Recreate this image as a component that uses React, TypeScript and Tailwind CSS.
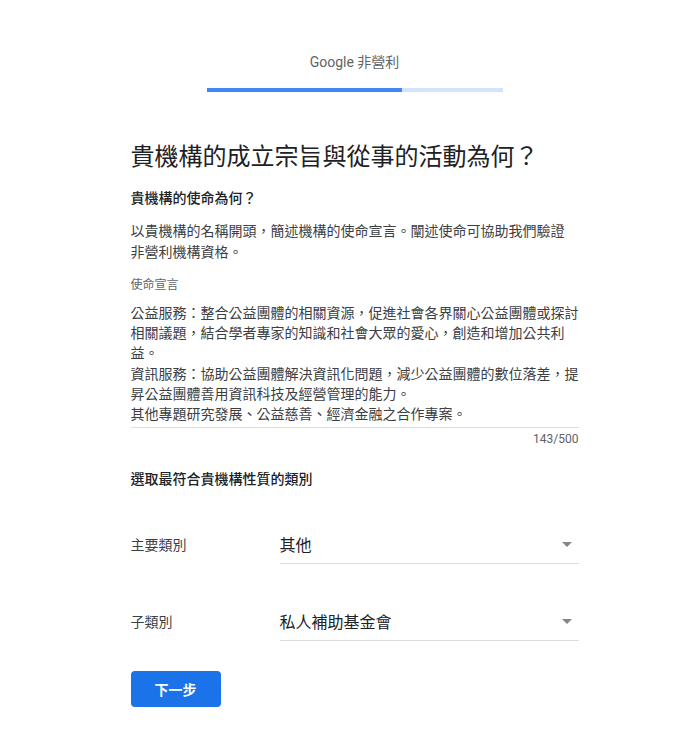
import { useState } from 'react'

const cjk = { fontFamily: '"Noto Sans CJK TC", Roboto, sans-serif' }
const latin = { fontFamily: 'Roboto, "Noto Sans CJK TC", sans-serif' }

function SelectRow({ label, value, className }: { label: string; value: string; className?: string }) {
  return (
    <div className={`flex items-end ${className ?? ''}`}>
      <div className="w-[149px] pb-[10px] text-[14px] leading-[20px] text-[#3c4043]">{label}</div>
      <div className="flex-1 flex items-center justify-between border-b border-[#dadce0] pb-[7px]">
        <span className="text-[16px] leading-[24px] text-[#202124]">{value}</span>
        <svg width="10" height="5" viewBox="0 0 10 5" className="mr-[7px]">
          <path d="M0 0 L10 0 L5 5 Z" fill="#80868b" />
        </svg>
      </div>
    </div>
  )
}

export default function App() {
  const [mission] = useState(
    '公益服務：整合公益團體的相關資源，促進社會各界關心公益團體或探討相關議題，結合學者專家的知識和社會大眾的愛心，創造和增加公共利益。\n資訊服務：協助公益團體解決資訊化問題，減少公益團體的數位落差，提昇公益團體善用資訊科技及經營管理的能力。\n其他專題研究發展、公益慈善、經濟金融之合作專案。'
  )

  return (
    <div className="min-h-screen bg-white" style={cjk}>
      <div className="mx-auto w-[458px] pl-[10px] pt-[52px] pb-[34px]">
        <div className="text-center text-[14px] leading-[20px] text-[#5f6368]" style={latin}>Google 非營利</div>

        <div className="mx-auto mt-[16px] flex h-[4px] w-[296px]">
          <div className="w-[195px] bg-[#4285f4]" />
          <div className="flex-1 bg-[#d2e3fc]" />
        </div>

        <h1 className="mt-[47px] text-[24px] leading-[32px] text-[#202124]">貴機構的成立宗旨與從事的活動為何？</h1>

        <h2 className="mt-[16px] text-[14px] leading-[20px] font-medium text-[#202124]">貴機構的使命為何？</h2>

        <p className="mt-[13px] max-w-[444px] text-[14px] leading-[21px] text-[#3c4043]">
          以貴機構的名稱開頭，簡述機構的使命宣言。闡述使命可協助我們驗證非營利機構資格。
        </p>

        <div className="mt-[14px] text-[12px] leading-[16px] text-[#5f6368]">使命宣言</div>

        <div className="mt-[10px] border-b border-[#dadce0] pb-[4px] text-[14px] leading-[20.2px] text-[#3c4043] whitespace-pre-wrap">
          {mission}
        </div>
        <div className="mt-[3px] text-right text-[12px] leading-[16px] text-[#5f6368]" style={latin}>{mission.length}/500</div>

        <h2 className="mt-[21px] text-[14px] leading-[20px] font-medium text-[#202124]">選取最符合貴機構性質的類別</h2>

        <SelectRow className="mt-[44px]" label="主要類別" value="其他" />
        <SelectRow className="mt-[45px]" label="子類別" value="私人補助基金會" />

        <button className="mt-[30px] h-[36px] w-[90px] rounded-[4px] bg-[#1a73e8] text-[14px] font-bold text-white">
          下一步
        </button>
      </div>
    </div>
  )
}
